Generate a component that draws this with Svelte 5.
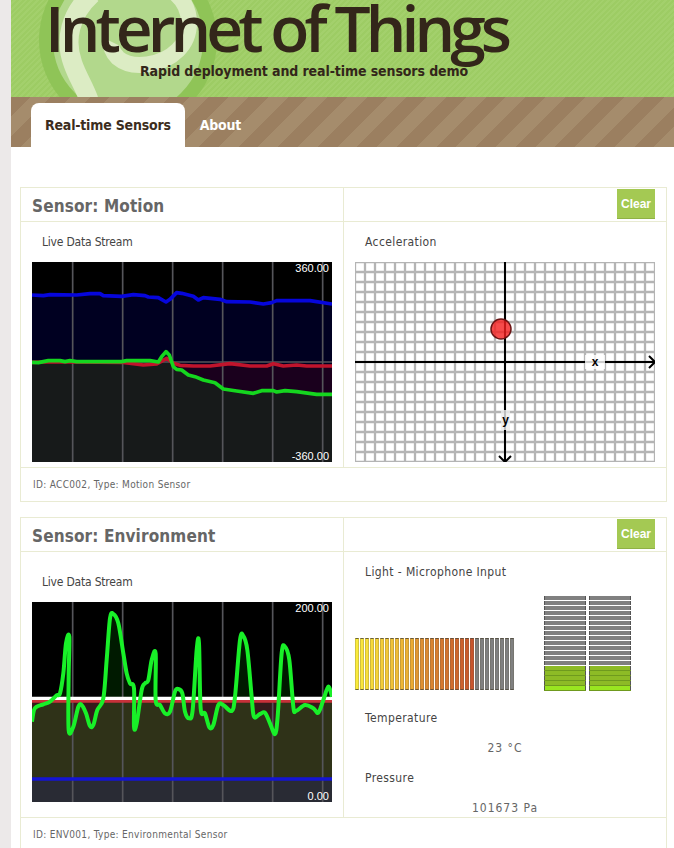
<script>
  const motion = {
    blue: [[66,345],[100,347],[120,344],[200,345],[240,341],[270,341],[280,347],[335,349],[370,344],[405,347],[415,351],[445,353],[468,366],[480,358],[500,338],[515,340],[550,349],[565,360],[580,353],[630,358],[650,365],[720,366],[760,372],[785,368],[800,362],[900,362],[966,372]],
    red: [[66,547],[100,546],[180,546],[340,547],[400,555],[440,552],[470,535],[490,550],[510,556],[550,558],[600,558],[660,551],[720,558],[770,558],[790,551],[820,558],[860,555],[890,558],[966,558]],
    green: [[66,547],[85,548],[115,542],[150,542],[165,545],[180,542],[200,545],[335,545],[350,542],[420,542],[445,546],[455,530],[468,515],[478,525],[490,560],[500,568],[515,570],[535,585],[555,590],[580,600],[615,608],[640,627],[680,633],[730,640],[755,632],[790,632],[800,636],[825,632],[860,635],[920,643],[966,643]]
  };
  const wave = [[66,635],[72,600],[80,590],[100,583],[120,575],[140,556],[150,550],[160,490],[168,400],[178,380],[176,500],[176,660],[190,650],[205,590],[215,585],[228,610],[240,648],[250,645],[262,600],[280,565],[290,450],[300,325],[310,312],[325,340],[340,430],[350,490],[360,520],[372,535],[372,650],[380,640],[395,540],[405,520],[415,510],[425,450],[437,430],[437,570],[450,585],[465,610],[480,605],[495,545],[505,537],[517,550],[525,605],[537,625],[548,600],[560,420],[567,400],[572,595],[585,610],[598,652],[610,645],[625,585],[640,585],[665,603],[675,560],[690,390],[700,378],[712,420],[725,560],[732,620],[750,612],[765,608],[780,640],[795,672],[803,620],[815,430],[825,410],[838,450],[850,590],[858,603],[885,585],[910,595],[925,608],[940,570],[955,530],[966,560]];

  const gridX = [188, 338, 488, 638, 788, 938];
  const line = (pts) => 'M' + pts.map((p) => p.join(' ')).join('L');
  const area = (pts, top) => line(pts) + `L966 ${top + 600}L66 ${top + 600}Z`;

  // catmull-rom, same look as the chart library's bezier mode
  function smooth(pts) {
    let d = `M${pts[0][0]} ${pts[0][1]}`;
    for (let i = 0; i < pts.length - 1; i++) {
      const a = pts[i - 1] || pts[i], b = pts[i], c = pts[i + 1], e = pts[i + 2] || c;
      d += `C${b[0] + (c[0] - a[0]) / 6} ${b[1] + (c[1] - a[1]) / 6} ${c[0] - (e[0] - b[0]) / 6} ${c[1] - (e[1] - b[1]) / 6} ${c[0]} ${c[1]}`;
    }
    return d;
  }
  const waveLine = smooth(wave);
  const waveArea = waveLine + 'L966 876L66 876Z';

  const mix = (a, b, t) => a.map((v, i) => Math.round(v + (b[i] - v) * t));
  const hbars = Array.from({ length: 32 }, (_, i) => {
    if (i >= 24) return 'rgb(128,128,128)';
    const c = i < 12 ? mix([250, 235, 60], [235, 170, 50], i / 11) : mix([225, 150, 50], [200, 85, 45], (i - 12) / 11);
    return `rgb(${c.join(',')})`;
  });
  const vbars = Array.from({ length: 19 }, (_, i) => (i < 14 ? '#808080' : i === 18 ? '#99e620' : '#8dbb26'));
  const ticks = Array.from({ length: 31 }, (_, i) => i * 10);
</script>

{#snippet meter()}
  <div class="vmeter">
    {#each vbars as c, i}
      <span class:lit={i >= 14} style="background: {c}"></span>
    {/each}
  </div>
{/snippet}

<div class="page">
  <header class="top">
    <svg class="swirl" width="290" height="97" viewBox="11 0 290 97" aria-hidden="true">
      <circle cx="128" cy="40" r="82" fill="#b2d88c" stroke="#8fc457" stroke-width="14" />
      <path d="M89 100C84 86 78 78 73 64C64 40 70 14 92 -6" fill="none" stroke="#dcecc4" stroke-width="19" />
      <path d="M176 -6C194 10 192 36 178 50C162 66 132 70 118 58C112 52 110 46 112 42" fill="none" stroke="#dcecc4" stroke-width="16" />
    </svg>
    <div class="brand">
      <h1>Internet of Things</h1>
      <p>Rapid deployment and real-time sensors demo</p>
    </div>
  </header>

  <nav class="tabs">
    <a class="tab active" href="#/">Real-time Sensors</a>
    <a class="tab" href="#/about">About</a>
  </nav>

  <main>
    <section class="panel">
      <div class="head">
        <h2>Sensor: Motion</h2>
        <div class="actions"><button>Clear</button></div>
      </div>
      <div class="body">
        <div class="cell">
          <h3 class="stream">Live Data Stream</h3>
          <div class="chart">
            <svg width="300" height="200" viewBox="66 246 900 600">
              <rect x="66" y="246" width="900" height="600" fill="#000" />
              <path d={area(motion.blue, 246)} fill="rgba(0,0,255,.13)" />
              <path d={area(motion.red, 246)} fill="rgba(255,0,0,.1)" />
              <path d={area(motion.green, 246)} fill="rgba(0,255,0,.1)" />
              {#each gridX as x}
                <line x1={x} x2={x} y1="246" y2="846" stroke="#55555a" stroke-width="5" />
              {/each}
              <line x1="66" x2="966" y1="546" y2="546" stroke="#55555a" stroke-width="4" />
              <path d={line(motion.blue)} class="trace" stroke="#0606dc" />
              <path d={line(motion.red)} class="trace" stroke="#c0142c" />
              <path d={line(motion.green)} class="trace" stroke="#15d61f" />
            </svg>
            <span class="val max">360.00</span>
            <span class="val min">-360.00</span>
          </div>
        </div>
        <div class="cell">
          <h3>Acceleration</h3>
          <div class="plane">
            <svg width="300" height="200" viewBox="0 0 300 200">
              {#each ticks as t}
                <line x1={t} x2={t} y1="0" y2="200" stroke="#b4b4b4" stroke-width="2.3" />
              {/each}
              {#each ticks.slice(0, 21) as t}
                <line x1="0" x2="300" y1={t} y2={t} stroke="#b4b4b4" stroke-width="2.3" />
              {/each}
              <line x1="0" x2="300" y1="100" y2="100" stroke="#000" stroke-width="2" />
              <line x1="150" x2="150" y1="0" y2="200" stroke="#000" stroke-width="2" />
              <path d="M294 94L300 100L294 106M144 194L150 200L156 194" fill="none" stroke="#000" stroke-width="2" />
              <circle cx="146" cy="67" r="10" fill="rgba(245,30,30,.8)" stroke="#6b1414" stroke-width="1.5" />
            </svg>
            <span class="axis ax">x</span>
            <span class="axis ay">y</span>
          </div>
        </div>
      </div>
      <div class="foot">ID: ACC002, Type: Motion Sensor</div>
    </section>

    <section class="panel">
      <div class="head">
        <h2>Sensor: Environment</h2>
        <div class="actions"><button>Clear</button></div>
      </div>
      <div class="body tall">
        <div class="cell lower">
          <h3 class="stream">Live Data Stream</h3>
          <div class="chart">
            <svg width="300" height="200" viewBox="66 276 900 600">
              <rect x="66" y="276" width="900" height="600" fill="#000" />
              <rect x="66" y="565" width="900" height="311" fill="rgba(255,255,255,.12)" />
              <rect x="66" y="573" width="900" height="303" fill="rgba(255,0,0,.1)" />
              <path d={waveArea} fill="rgba(0,255,0,.1)" />
              <rect x="66" y="807" width="900" height="69" fill="rgba(0,0,255,.12)" />
              {#each gridX as x}
                <line x1={x} x2={x} y1="276" y2="876" stroke="#55555a" stroke-width="5" />
              {/each}
              <line x1="66" x2="966" y1="573" y2="573" stroke="#c8313a" stroke-width="10" />
              <line x1="66" x2="966" y1="565" y2="565" stroke="#fff" stroke-width="10" />
              <line x1="66" x2="966" y1="807" y2="807" stroke="#1414d2" stroke-width="10" />
              <path d={waveLine} class="trace wave" stroke="#18f028" />
            </svg>
            <span class="val max">200.00</span>
            <span class="val min">0.00</span>
          </div>
        </div>
        <div class="cell">
          <h3>Light - Microphone Input</h3>
          <div class="meters">
            <div class="hmeter">
              {#each hbars as c}
                <span style="background: {c}"></span>
              {/each}
            </div>
            <div class="vpair">
              {@render meter()}
              {@render meter()}
            </div>
          </div>
          <h3 class="reading">Temperature</h3>
          <p class="value">23 °C</p>
          <h3 class="reading">Pressure</h3>
          <p class="value">101673 Pa</p>
        </div>
      </div>
      <div class="foot">ID: ENV001, Type: Environmental Sensor</div>
    </section>
  </main>
</div>

<style>
  :global(body) {
    background: #ece9e9;
    margin: 0;
    overflow: hidden;
  }
  .page {
    background: #fff;
    color: #555;
    font-family: "DejaVu Sans Condensed", "DejaVu Sans", sans-serif;
    height: 848px;
    margin-left: 11px;
    overflow: hidden;
  }
  .top {
    background: repeating-linear-gradient(135deg, #9dcc64 0 2px, #a3d06c 2px 4px);
    box-sizing: border-box;
    height: 97px;
    overflow: hidden;
    position: relative;
  }
  .swirl {
    left: 0;
    position: absolute;
    top: 0;
  }
  .brand {
    color: #33261a;
    position: relative;
  }
  h1 {
    font-family: "Open Sans", sans-serif;
    font-size: 64px;
    font-weight: 600;
    letter-spacing: -4.9px;
    line-height: 56px;
    margin: 0 0 0 34px;
    white-space: nowrap;
  }
  .brand p {
    font-size: 14px;
    font-weight: 700;
    letter-spacing: -0.1px;
    line-height: 18px;
    margin: 6px 0 0 129px;
    white-space: nowrap;
  }
  .tabs {
    background: repeating-linear-gradient(135deg, #9b7f60 0 14px, #a58c6c 14px 28px);
    display: flex;
    gap: 1px;
    height: 44px;
    padding: 6px 0 0 20px;
  }
  .tab {
    border-radius: 8px 8px 0 0;
    color: #fff;
    font-size: 14px;
    font-weight: 700;
    letter-spacing: -0.2px;
    line-height: 44px;
    padding: 0 14px;
    text-decoration: none;
  }
  .tab.active {
    background: #fff;
    color: #3c2d20;
  }
  main {
    padding: 40px 7px 0 9px;
  }
  .panel {
    border: 1px solid #e9ebd3;
    margin-bottom: 15px;
  }
  .head,
  .body {
    display: grid;
    grid-template-columns: 323px 1fr;
  }
  .head {
    border-bottom: 1px solid #e9ebd3;
    height: 33px;
  }
  .head > :first-child,
  .cell:first-child {
    border-right: 1px solid #e9ebd3;
  }
  h2 {
    color: #666;
    font-size: 17px;
    font-weight: 700;
    letter-spacing: 0.13px;
    line-height: 29px;
    margin: 0;
    padding: 4px 0 0 11px;
  }
  .actions {
    display: flex;
    justify-content: flex-end;
    padding: 1px 11px 0 0;
  }
  button {
    background: #a4c953;
    border: 0;
    border-bottom: 1px solid #8fb145;
    color: #fff;
    font-family: "Liberation Sans", sans-serif;
    font-size: 12px;
    font-weight: 700;
    height: 30px;
    padding: 0;
    width: 38px;
  }
  .body {
    height: 245px;
  }
  .body.tall {
    height: 265px;
  }
  .cell {
    padding: 12px 11px 0;
  }
  .cell.lower {
    padding-top: 22px;
  }
  h3 {
    color: #444;
    font-size: 12px;
    font-weight: 400;
    letter-spacing: 0.4px;
    line-height: 16px;
    margin: 0 0 12px 10px;
  }
  h3.stream {
    letter-spacing: -0.2px;
  }
  .chart,
  .plane {
    height: 200px;
    position: relative;
    width: 300px;
  }
  .chart svg,
  .plane svg {
    display: block;
  }
  .trace {
    fill: none;
    stroke-linejoin: round;
    stroke-width: 11;
  }
  .trace.wave {
    stroke-width: 12;
  }
  .val {
    color: #fff;
    font-family: "Liberation Sans", sans-serif;
    font-size: 11px;
    line-height: 12px;
    position: absolute;
    right: 3px;
  }
  .max {
    top: 0;
  }
  .min {
    bottom: 0;
  }
  .axis {
    color: #000;
    font-family: "Liberation Sans", sans-serif;
    font-size: 12px;
    font-weight: 700;
    line-height: 14px;
    position: absolute;
    text-align: center;
  }
  .ax {
    background: rgba(255, 255, 255, 0.8);
    left: 230px;
    top: 93px;
    width: 20px;
  }
  .ay {
    background: rgba(238, 238, 238, 0.8);
    height: 20px;
    left: 146px;
    line-height: 20px;
    top: 148px;
    width: 9px;
  }
  .meters {
    align-items: flex-end;
    display: flex;
    margin: 16px 0 20px;
  }
  .hmeter {
    display: flex;
    gap: 1px;
  }
  .hmeter span {
    background-clip: padding-box;
    border: 1px solid rgba(95, 90, 70, 0.25);
    border-bottom-color: rgba(80, 75, 60, 0.85);
    border-top-color: rgba(80, 75, 60, 0.85);
    box-sizing: border-box;
    height: 52px;
    width: 4px;
  }
  .vpair {
    display: flex;
    gap: 3px;
    margin-left: 30px;
  }
  .vmeter {
    display: flex;
    flex-direction: column;
    gap: 1px;
  }
  .vmeter span {
    border-left: 1px solid #555;
    border-right: 1px solid #555;
    box-sizing: border-box;
    height: 4px;
    width: 42px;
  }
  .vmeter span.lit {
    box-shadow: 0 1px 0 #6f9a1e;
  }
  .reading {
    margin: 14px 0 0 10px;
  }
  .value {
    color: #666;
    font-size: 12px;
    letter-spacing: 1px;
    line-height: 16px;
    margin: 14px 0 0;
    text-align: center;
  }
  .foot {
    border-top: 1px solid #e9ebd3;
    color: #666;
    font-size: 10px;
    letter-spacing: 0.32px;
    line-height: 33px;
    padding-left: 12px;
  }
</style>
